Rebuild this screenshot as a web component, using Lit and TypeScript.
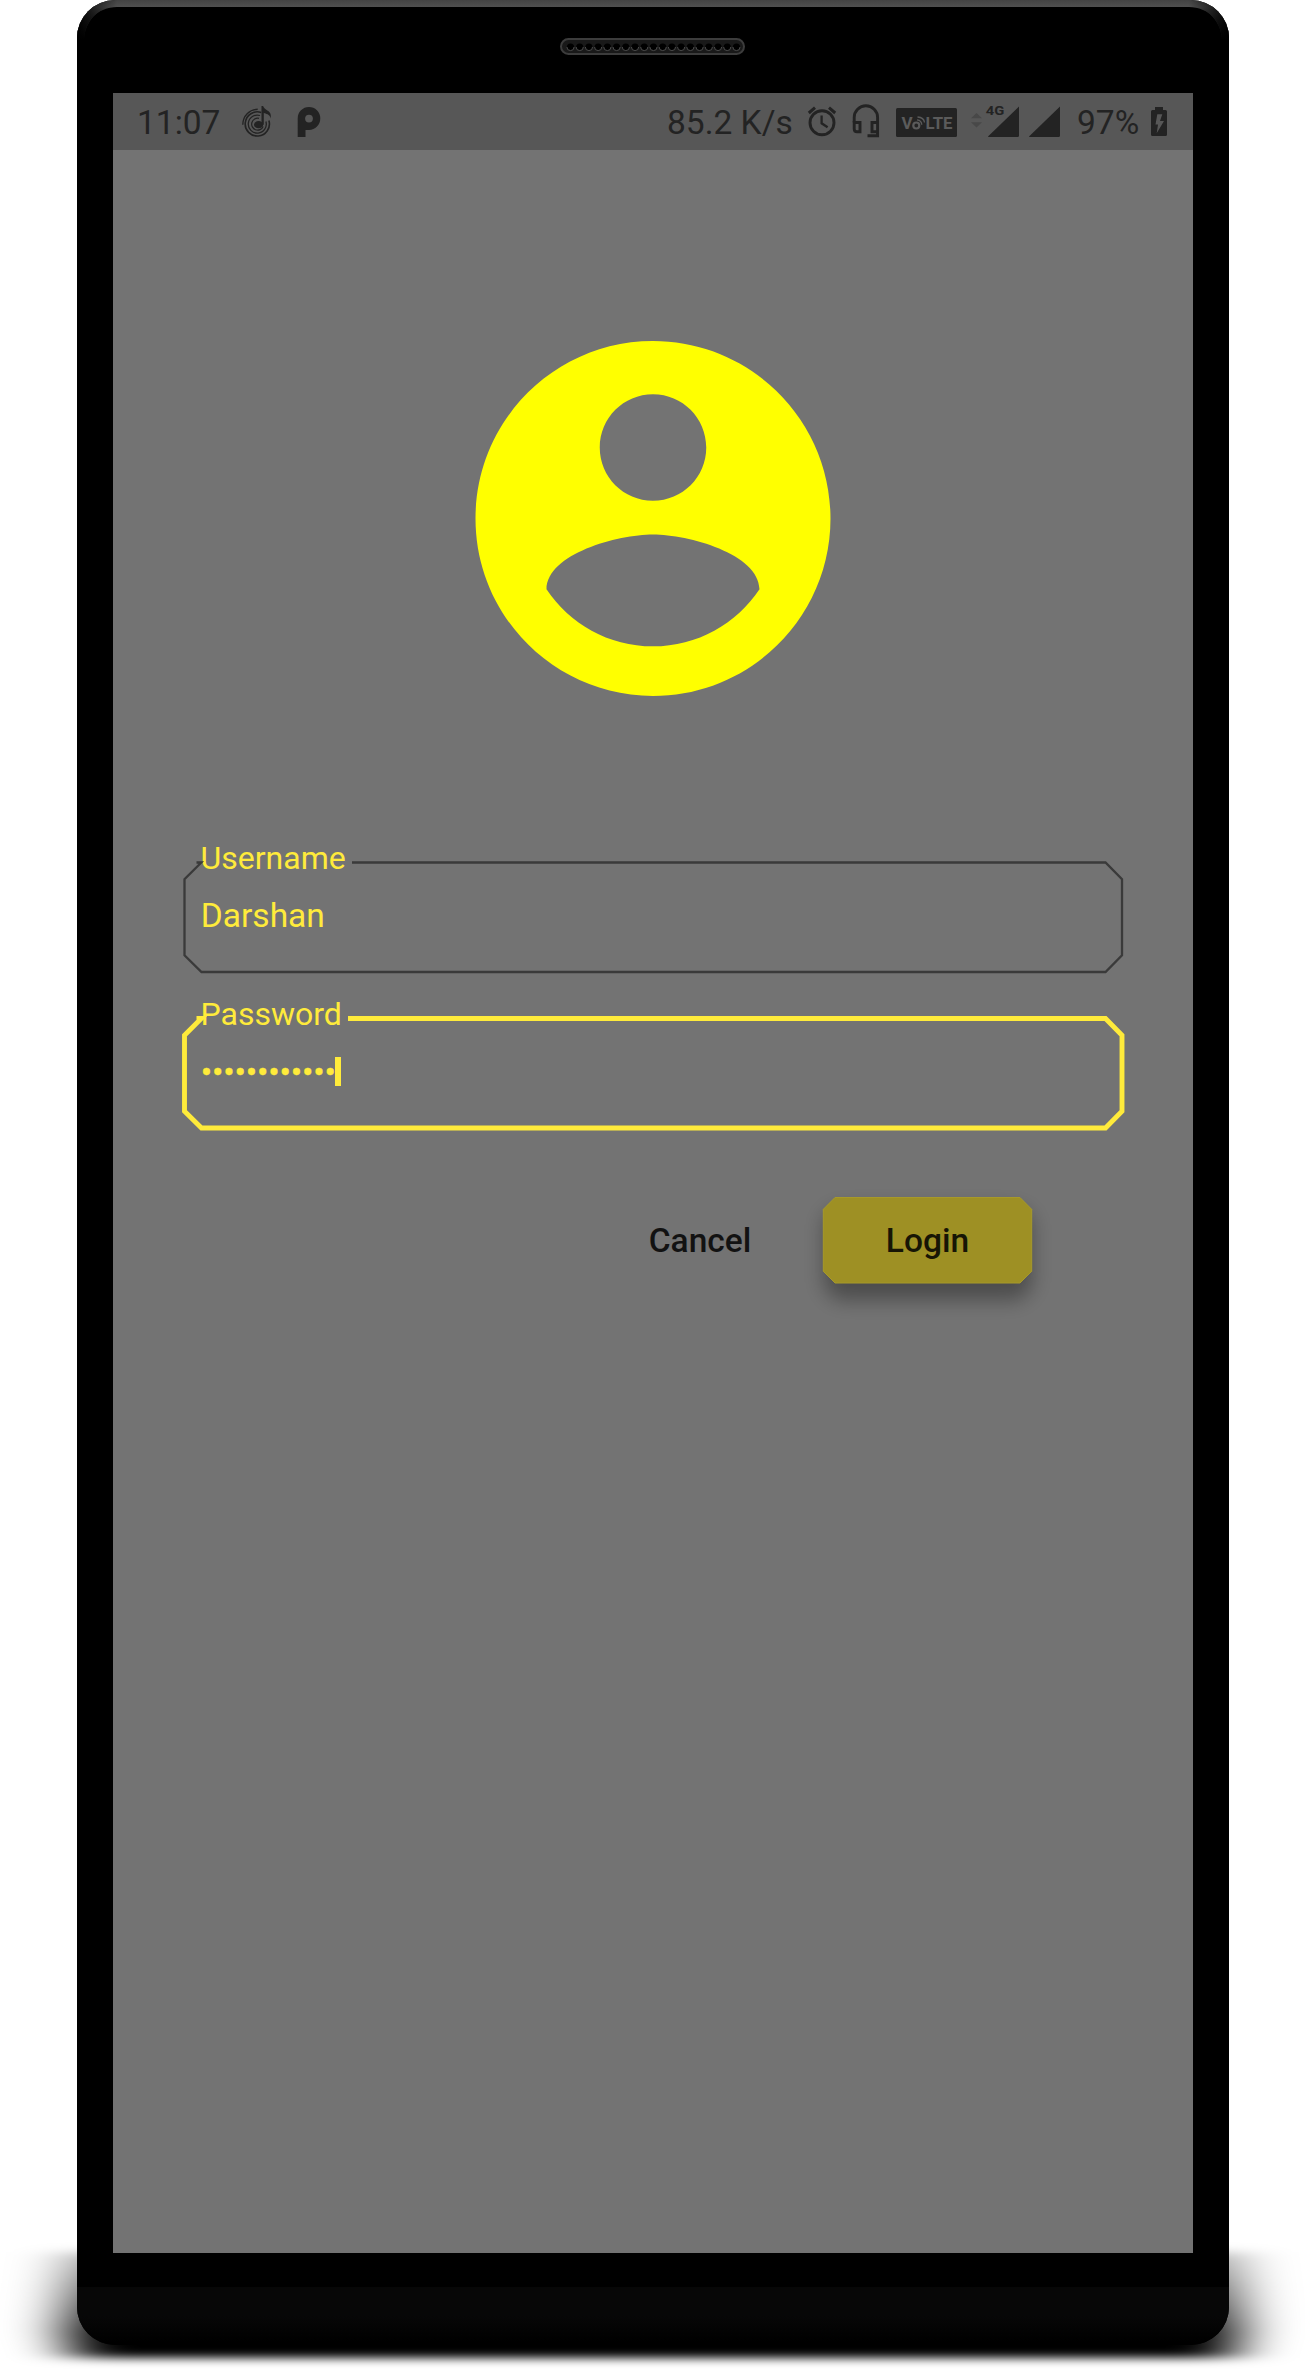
import { LitElement, html, svg, css } from "lit";
import { customElement, property } from "lit/decorators.js";

@customElement("status-bar")
class StatusBar extends LitElement {
  static styles = css`
    :host {
      display: flex;
      align-items: center;
      height: 57px;
      box-sizing: border-box;
      padding: 0 26px 0 24px;
      background: #575757;
      color: #232323;
      font: 33.5px/57px Roboto, sans-serif;
      white-space: nowrap;
    }
    span { padding-top: 2px; line-height: 55px; box-sizing: border-box; }
    svg { display: block; flex: none; height: 57px; fill: #232323; }
    .time { width: 105px; }
    .disc { width: 30px; }
    .letter { width: 24px; margin-left: 25px; }
    .spacer { flex: 1; }
    .speed { width: 140px; }
    .alarm { width: 30px; margin-right: 14px; }
    .headset { width: 30px; margin-right: 15px; }
    .volte { width: 61px; margin-right: 14px; }
    .signal { width: 91px; margin-right: 15px; }
    .percent { width: 74px; }
    .battery { width: 16px; }
    .line { fill: none; stroke: #232323; }
    .small { font: 700 13.5px Roboto, sans-serif; }
    .badge { font: 700 17px Roboto, sans-serif; fill: #5b5b5b; }
    .cut { fill: #575757; }
    .faint { fill: #484848; }
    .wave { fill: none; stroke: #5b5b5b; }
  `;
  render() {
    return html`
      <span class="time">11:07</span>
      <svg class="disc" viewBox="242 93 30 57">
        <g class="line">
          <path stroke-width="1.600" d="M261.200 112.500A12.100 12.100 0 1 0 268.900 120.500" />
          <path stroke-width="1.300" d="M260 115.500A9 9 0 1 0 265.900 121.500" />
          <path stroke-width="1.200" d="M259 118.300A6 6 0 1 0 263.200 126.500" />
          <path stroke-width="1.400" d="M242.800 124.700C242.800 116 249.500 109.300 257.700 109.300" />
        </g>
        <ellipse cx="258.600" cy="124.700" rx="4.600" ry="3.600" />
        <path d="M261.500 124.500V106h1.600c1 4 7.700 4.500 7.700 9.500v3c-1.200-4.500-5-4.500-7-5.700v12z" />
      </svg>
      <svg class="letter" viewBox="297 93 24 57">
        <path fill-rule="evenodd" d="M297.700 137v-18.500a11.300 11.500 0 1 1 11.300 11.400h-3.500V137zM309 114.700a3.900 3.900 0 1 0 0 7.800a3.900 3.900 0 1 0 0-7.800" />
      </svg>
      <span class="spacer"></span>
      <span class="speed">85.2 K/s</span>
      <svg class="alarm" viewBox="807 93 30 57">
        <circle class="line" cx="822" cy="122.700" r="12" stroke-width="2.900" />
        <path class="line" d="M821.600 115.500v7.800l6 4" stroke-width="2.300" />
        <path class="line" d="M808.800 113l6.200-5.300M835.200 113l-6.200-5.300" stroke-width="3" />
      </svg>
      <svg class="headset" viewBox="851 93 30 57">
        <path class="line" stroke-width="2.900" d="M854.200 122.500v-5a11.700 11.700 0 0 1 23.400 0v18.200H867.500" />
        <path class="line" stroke-width="2.900" d="M854.200 122.500h5.800v9.200h-3q-2.800 0-2.800-2.800zM877.600 122.500h-5.600v9.200h5.600" />
      </svg>
      <svg class="volte" viewBox="896 93 61 57">
        <rect x="896" y="108" width="61" height="29" rx="1.500" />
        <text class="badge" x="901.500" y="129">V</text>
        <text class="badge" x="925.500" y="129" textLength="27" lengthAdjust="spacingAndGlyphs">LTE</text>
        <circle class="wave" cx="916.300" cy="125.500" r="3" stroke-width="2.200" />
        <path class="wave" stroke-width="1.300" d="M917 119.800q4.600.5 4.800 5M917.500 117q6.500 .5 7 5.500" />
      </svg>
      <svg class="signal" viewBox="971 93 91 57">
        <path class="faint" d="M971 118.300L976.500 113L982 118.300zM971 122.300L976.500 127.600L982 122.300z" />
        <text class="small" x="985.800" y="115" textLength="18.500" lengthAdjust="spacingAndGlyphs">4G</text>
        <path d="M988 138.500L1019 108.500V137.500q0 1.500-1.500 1.500H988.500z" transform="translate(0 -2)" />
        <path d="M1029 138.500L1060 108.500V137.500q0 1.500-1.500 1.500H1029.500z" transform="translate(0 -2)" />
      </svg>
      <span class="percent">97%</span>
      <svg class="battery" viewBox="1151 93 16 57">
        <path d="M1155 107h8v3h2.500q1.500 0 1.500 1.500v23q0 1.500-1.500 1.500h-13q-1.500 0-1.500-1.500v-23q0-1.500 1.500-1.500h2.500z" />
        <path class="cut" d="M1157.300 114.300h5l-2.300 6.700h4l-7.300 12.300 1.300-8.800h-2.500z" />
      </svg>
    `;
  }
}

@customElement("outlined-field")
class OutlinedField extends LitElement {
  @property() label = "";
  @property() value = "";
  @property({ type: Boolean }) focused = false;
  @property({ type: Number }) gap = 0;

  static styles = css`
    :host {
      display: block;
      position: relative;
      width: 938px;
      height: 156px;
      color: #ffeb3b;
      font-family: Roboto, sans-serif;
    }
    .outline { position: absolute; left: -3px; top: 0; width: 944px; height: 140px; fill: none; }
    .idle { stroke: #3a3a3a; stroke-width: 2.300; }
    .active { stroke: #ffeb3b; stroke-width: 4.900; }
    .label { padding-left: 16.500px; font-size: 32px; line-height: 36px; }
    .value { display: flex; align-items: center; padding: 20px 0 0 16.800px; font-size: 33.500px; line-height: 40px; }
    .dots { font-size: 34px; letter-spacing: -0.220px; -webkit-text-stroke: 0.300px #ffeb3b; }
    .caret { width: 5.500px; height: 29px; margin: -1px 0 0 -0.500px; background: #ffeb3b; }
  `;
  render() {
    return html`
      <svg class="outline" viewBox="-3 0 944 140">
        <path
          class=${this.focused ? "active" : "idle"}
          d="M${this.gap} 22.500H921.500L938 39.300V115.300L921.500 132H17.500L.500 115.300V39.300L17.300 22.500H12.500"
        />
      </svg>
      <div class="label">${this.label}</div>
      <div class="value">
        <span class=${this.focused ? "dots" : ""}>${this.value}</span>
        ${this.focused ? html`<span class="caret"></span>` : ""}
      </div>
    `;
  }
}

@customElement("app-root")
class AppRoot extends LitElement {
  static styles = css`
    :host { display: block; position: relative; height: 2370px; overflow: hidden; background: #fff; font-family: Roboto, sans-serif; }
    .shadow { position: absolute; left: 0; top: 2220px; width: 1305px; height: 150px; }
    .phone {
      position: relative;
      display: flex;
      flex-direction: column;
      width: 1152px;
      height: 2345px;
      margin-left: 77px;
      border-radius: 38px;
      overflow: hidden;
      background: #000;
    }
    .rim { position: absolute; left: 0; top: 0; width: 1152px; height: 44px; }
    .top { display: flex; flex: none; height: 93px; box-sizing: border-box; padding: 38px 1px 0 0; justify-content: center; }
    .speaker { width: 185px; height: 17px; }
    .screen { display: flex; flex-direction: column; flex: none; width: 1080px; height: 2160px; margin: 0 36px; background: #737373; }
    .avatar { width: 426px; height: 427px; margin: 155px auto 0; fill: #ff0; }
    .form { padding: 108px 0 0 71px; }
    .actions { display: flex; padding: 45px 161px 0 0; justify-content: flex-end; }
    .button { height: 88px; line-height: 88px; font-size: 33.500px; font-weight: 500; text-align: center; }
    .cancel { width: 120px; margin-right: 63px; color: #121212; }
    .login { position: relative; width: 209px; color: #171505; }
    .plate { position: absolute; left: -40px; top: -30px; width: 290px; height: 160px; }
    .caption { position: relative; }
    .chin { flex: none; height: 58px; margin-top: 34px; background: linear-gradient(#070707 0 50%, #000 95%); }
  `;
  render() {
    const holes = Array.from({ length: 19 }, (_, i) => 10.5 + i * 9.22);
    return html`
      <svg class="shadow" viewBox="0 2220 1305 150">
        <defs>
          <filter id="wide" x="-20%" y="-50%" width="140%" height="200%"><feGaussianBlur stdDeviation="28 5" /></filter>
          <linearGradient id="fade" x1="0" y1="0" x2="0" y2="1">
            <stop offset="0" stop-opacity=".3" /><stop offset=".8" stop-opacity="1" />
          </linearGradient>
        </defs>
        <path filter="url(#wide)" fill="url(#fade)" d="M68 2252H1237L1240 2330 1232 2358H74L64 2330z" />
      </svg>
      <div class="phone">
        <svg class="rim" viewBox="0 0 1152 44">
          <defs>
            <linearGradient id="down" x1="0" y1="0" x2="0" y2="40" gradientUnits="userSpaceOnUse">
              <stop offset="0" stop-color="#434343" /><stop offset=".18" stop-color="#505050" /><stop offset="1" stop-color="#000" />
            </linearGradient>
            <linearGradient id="side" x1="0" x2="1">
              <stop offset="0" stop-color="#000" /><stop offset=".006" stop-color="#000" stop-opacity=".8" /><stop offset=".035" stop-color="#000" stop-opacity="0" />
              <stop offset=".965" stop-color="#000" stop-opacity="0" /><stop offset=".994" stop-color="#000" stop-opacity=".8" /><stop offset="1" stop-color="#000" />
            </linearGradient>
          </defs>
          <path fill="url(#down)" d="M0 0H1152V42H1145C1145 22 1132 7 1112 7H40C20 7 7 22 7 42H0z" />
          <path fill="url(#side)" d="M0 0H1152V42H1145C1145 22 1132 7 1112 7H40C20 7 7 22 7 42H0z" />
        </svg>
        <div class="top">
          <svg class="speaker" viewBox="0 0 185 17">
            <rect x="1" y="1" width="183" height="15" rx="7.500" fill="#191919" stroke="#3c3c3c" stroke-width="2" />
            ${holes.map((x) => svg`<circle cx=${x} cy="9" r="3.600" fill="#000" /><path d="M${x - 3.6} 9a3.600 3.600 0 0 0 7.200 0" fill="none" stroke="#4c4c4c" />`)}
          </svg>
        </div>
        <div class="screen">
          <status-bar></status-bar>
          <svg class="avatar" viewBox="0 0 24 24">
            <path d="M12 2C6.480 2 2 6.480 2 12s4.480 10 10 10 10-4.480 10-10S17.520 2 12 2zm0 3c1.660 0 3 1.340 3 3s-1.340 3-3 3-3-1.340-3-3 1.340-3 3-3zm0 14.200c-2.500 0-4.710-1.280-6-3.220.030-1.990 4-3.080 6-3.080 1.990 0 5.970 1.090 6 3.080-1.290 1.940-3.500 3.220-6 3.220z" />
          </svg>
          <div class="form">
            <outlined-field label="Username" value="Darshan" gap="168"></outlined-field>
            <outlined-field label="Password" value="••••••••••••" gap="164" focused></outlined-field>
            <div class="actions">
              <div class="button cancel">Cancel</div>
              <div class="button login">
                <svg class="plate" viewBox="-40 -30 290 160">
                  <defs>
                    <filter id="soft" x="-20%" y="-40%" width="140%" height="190%"><feGaussianBlur stdDeviation="10" /></filter>
                  </defs>
                  <path filter="url(#soft)" fill-opacity=".34" d="M14 12H196L209 22V90L196 103H14L1 90V22z" />
                  <path d="M12 .500H197L208.700 12.300V74.300L197 86H12L.300 74.300V12.300z" fill="#9e9024" stroke="#a79929" />
                </svg>
                <span class="caption">Login</span>
              </div>
            </div>
          </div>
        </div>
        <div class="chin"></div>
      </div>
    `;
  }
}
